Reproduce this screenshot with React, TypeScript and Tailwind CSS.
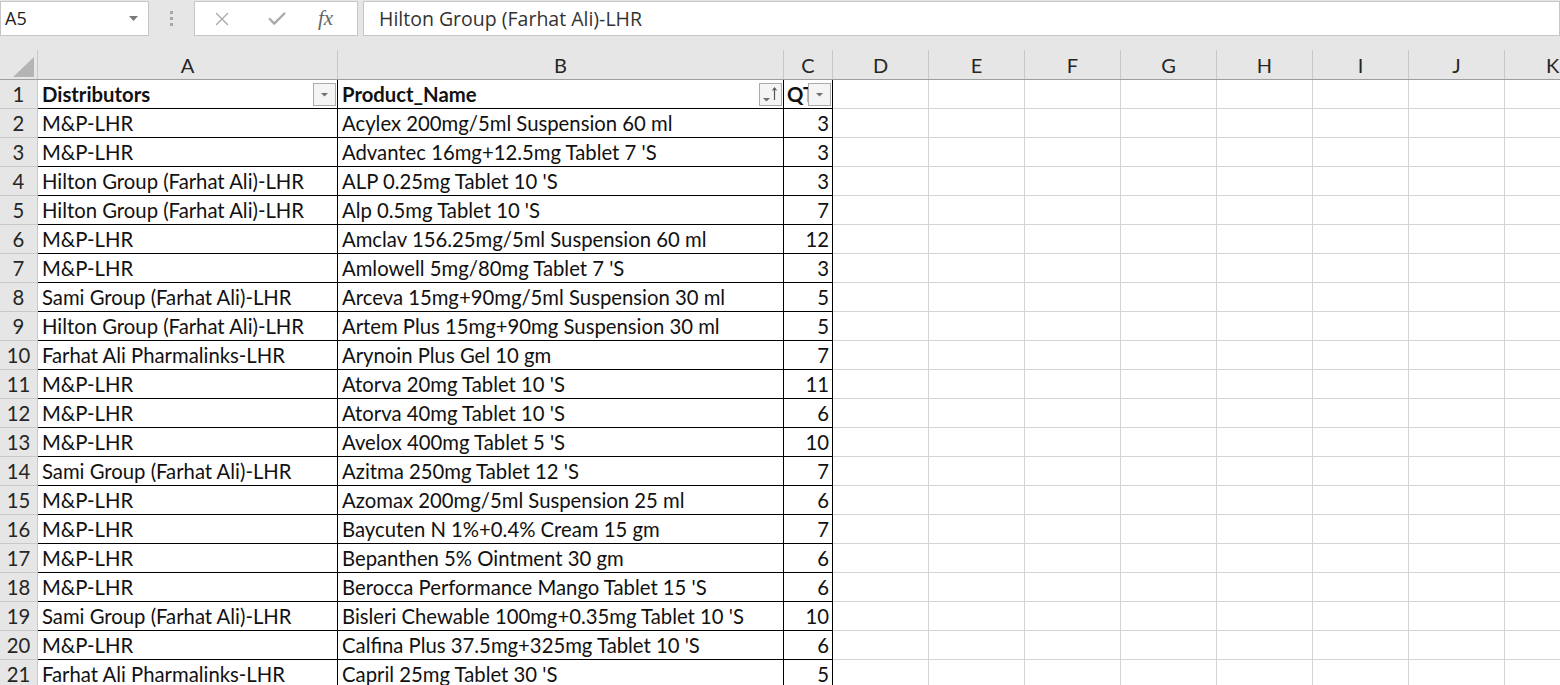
import { X, Check } from "lucide-react";

interface Row {
  dist: string;
  product: string;
  qty: number;
}

const rows: Row[] = [
  { dist: "M&P-LHR", product: "Acylex 200mg/5ml Suspension 60 ml", qty: 3 },
  { dist: "M&P-LHR", product: "Advantec 16mg+12.5mg Tablet 7 'S", qty: 3 },
  { dist: "Hilton Group (Farhat Ali)-LHR", product: "ALP 0.25mg Tablet 10 'S", qty: 3 },
  { dist: "Hilton Group (Farhat Ali)-LHR", product: "Alp 0.5mg Tablet 10 'S", qty: 7 },
  { dist: "M&P-LHR", product: "Amclav 156.25mg/5ml Suspension 60 ml", qty: 12 },
  { dist: "M&P-LHR", product: "Amlowell 5mg/80mg Tablet 7 'S", qty: 3 },
  { dist: "Sami Group (Farhat Ali)-LHR", product: "Arceva 15mg+90mg/5ml Suspension 30 ml", qty: 5 },
  { dist: "Hilton Group (Farhat Ali)-LHR", product: "Artem Plus 15mg+90mg Suspension 30 ml", qty: 5 },
  { dist: "Farhat Ali Pharmalinks-LHR", product: "Arynoin Plus Gel 10 gm", qty: 7 },
  { dist: "M&P-LHR", product: "Atorva 20mg Tablet 10 'S", qty: 11 },
  { dist: "M&P-LHR", product: "Atorva 40mg Tablet 10 'S", qty: 6 },
  { dist: "M&P-LHR", product: "Avelox 400mg Tablet 5 'S", qty: 10 },
  { dist: "Sami Group (Farhat Ali)-LHR", product: "Azitma 250mg Tablet 12 'S", qty: 7 },
  { dist: "M&P-LHR", product: "Azomax 200mg/5ml Suspension 25 ml", qty: 6 },
  { dist: "M&P-LHR", product: "Baycuten N 1%+0.4% Cream 15 gm", qty: 7 },
  { dist: "M&P-LHR", product: "Bepanthen 5% Ointment 30 gm", qty: 6 },
  { dist: "M&P-LHR", product: "Berocca Performance Mango Tablet 15 'S", qty: 6 },
  { dist: "Sami Group (Farhat Ali)-LHR", product: "Bisleri Chewable 100mg+0.35mg Tablet 10 'S", qty: 10 },
  { dist: "M&P-LHR", product: "Calfina Plus 37.5mg+325mg Tablet 10 'S", qty: 6 },
  { dist: "Farhat Ali Pharmalinks-LHR", product: "Capril 25mg Tablet 30 'S", qty: 5 },
];

const emptyCols = ["D", "E", "F", "G", "H", "I", "J", "K"];

function FilterButton({ sorted }: { sorted?: boolean }) {
  return (
    <div className="absolute right-[1px] top-[3px] w-[23px] h-[23px] border border-[#ababab] bg-[#f4f4f4] flex items-center justify-center">
      {sorted ? (
        <svg width="21" height="21" viewBox="0 0 21 21">
          <path d="M3 14h7l-3.5 3.5z" fill="#707070" />
          <path d="M14.5 4v12" stroke="#555" strokeWidth="1.2" />
          <path d="M12.5 6.5l2-2.5 2 2.5" stroke="#555" strokeWidth="1.2" fill="none" />
        </svg>
      ) : (
        <svg width="21" height="21" viewBox="0 0 21 21">
          <path d="M7 9h7l-3.5 3.5z" fill="#707070" />
        </svg>
      )}
    </div>
  );
}

export default function App() {
  const cellFont = { fontFamily: "Lato, 'Liberation Sans', sans-serif" };
  return (
    <div className="w-[1560px] h-[685px] overflow-hidden bg-white text-[#111]" style={cellFont}>
      {/* Formula bar */}
      <div className="bg-[#e6e6e6] h-[50px] pt-[1px] flex items-start">
        <div className="w-[149px] h-[35px] bg-white border border-[#c6c6c6] flex items-center justify-between pl-[4px] pr-[10px] text-[18px] text-[#222]" style={{ fontFamily: "'Open Sans', sans-serif" }}>
          <span>A5</span>
          <svg width="9" height="5" viewBox="0 0 9 5">
            <path d="M0 0h9L4.5 5z" fill="#7a7a7a" />
          </svg>
        </div>
        <div className="w-[45px] h-[35px] flex flex-col items-center justify-center gap-[3px]">
          <div className="w-[3px] h-[3px] bg-[#a8a8a8]" />
          <div className="w-[3px] h-[3px] bg-[#a8a8a8]" />
          <div className="w-[3px] h-[3px] bg-[#a8a8a8]" />
        </div>
        <div className="w-[164px] h-[35px] bg-white border border-[#c6c6c6] flex items-center">
          <X className="ml-[16px] w-[22px] h-[22px] text-[#a9a9a9]" strokeWidth={1.5} />
          <Check className="ml-[33px] w-[22px] h-[22px] text-[#a9a9a9]" strokeWidth={2.5} />
          <span className="ml-[30px] text-[21px] italic text-[#666]" style={{ fontFamily: "'Liberation Serif', serif" }}>fx</span>
        </div>
        <div className="ml-[5px] flex-1 h-[35px] bg-white border border-[#c6c6c6] flex items-center pl-[15px] text-[19.5px] text-[#333]" style={{ fontFamily: "'Open Sans', sans-serif" }}>
          Hilton Group (Farhat Ali)-LHR
        </div>
      </div>

      {/* Column headers */}
      <div className="flex h-[30px] bg-[#e6e6e6] border-b border-[#9e9e9e] text-[20px] text-[#262626]">
        <div className="w-[38px] shrink-0 border-r border-[#c8c8c8] relative">
          <svg className="absolute left-[13px] top-[7px]" width="21" height="20" viewBox="0 0 21 20">
            <path d="M21 0v20H0z" fill="#b4b4b4" />
          </svg>
        </div>
        <div className="w-[300px] shrink-0 border-r border-[#c8c8c8] flex items-center justify-center">A</div>
        <div className="w-[446px] shrink-0 border-r border-[#c8c8c8] flex items-center justify-center">B</div>
        <div className="w-[49px] shrink-0 border-r border-[#c8c8c8] flex items-center justify-center">C</div>
        {emptyCols.map(c => (
          <div key={c} className="w-[96px] shrink-0 border-r border-[#c8c8c8] flex items-center justify-center">{c}</div>
        ))}
      </div>

      {/* Row 1: table header */}
      <div className="flex h-[29px] text-[20.3px]">
        <div className="w-[38px] shrink-0 bg-[#e6e6e6] border-r border-b border-[#c8c8c8] flex items-center justify-center text-[#262626]">1</div>
        <div className="relative w-[300px] shrink-0 border-r border-b border-black flex items-center pl-[4px] font-bold">
          Distributors
          <FilterButton />
        </div>
        <div className="relative w-[446px] shrink-0 border-r border-b border-black flex items-center pl-[4px] font-bold">
          Product_Name
          <FilterButton sorted />
        </div>
        <div className="relative w-[49px] shrink-0 border-r border-b border-black flex items-center pl-[3px] font-bold overflow-hidden whitespace-nowrap">
          QTY
          <FilterButton />
        </div>
        {emptyCols.map(c => (
          <div key={c} className="w-[96px] shrink-0 border-r border-b border-[#d4d4d4]" />
        ))}
      </div>

      {rows.map((r, i) => (
        <div key={i} className="flex h-[29px] text-[20.3px]">
          <div className="w-[38px] shrink-0 bg-[#e6e6e6] border-r border-b border-[#c8c8c8] flex items-center justify-center text-[#262626]">{i + 2}</div>
          <div className="w-[300px] shrink-0 border-r border-b border-black flex items-center pl-[4px] whitespace-nowrap overflow-hidden">{r.dist}</div>
          <div className="w-[446px] shrink-0 border-r border-b border-black flex items-center pl-[4px] whitespace-nowrap overflow-hidden">{r.product}</div>
          <div className="w-[49px] shrink-0 border-r border-b border-black flex items-center justify-end pr-[3px]">{r.qty}</div>
          {emptyCols.map(c => (
            <div key={c} className="w-[96px] shrink-0 border-r border-b border-[#d4d4d4]" />
          ))}
        </div>
      ))}
    </div>
  );
}
